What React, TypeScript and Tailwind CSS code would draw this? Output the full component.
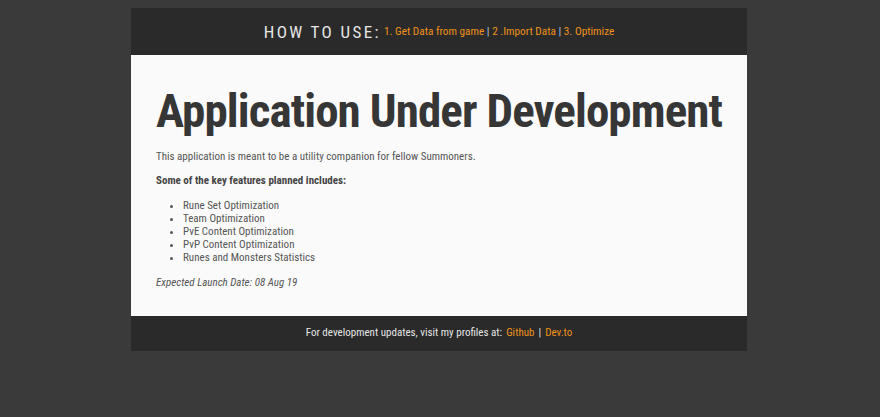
import React from "react";

const cond = { fontFamily: '"Roboto Condensed", "Liberation Sans Narrow", Roboto, sans-serif' };

export default function App() {
  return (
    <div className="min-h-[417px] w-full bg-[#3a3a3a] pt-2" style={cond}>
      <div className="w-[616px] ml-[131px]">
        <header className="flex h-[47px] items-center justify-center bg-[#2a2a2a] pt-[2px]">
          <span className="text-[17px] tracking-[2.4px] text-[#e6e6e6]">HOW TO USE:</span>
          <span className="ml-[3px] text-[11.25px] text-[#f0921a]">
            1. Get Data from game <span className="text-[#b9cce0]">|</span> 2 .Import Data{" "}
            <span className="text-[#b9cce0]">|</span> 3. Optimize
          </span>
        </header>
        <main className="bg-[#fafafa] px-[25px] pt-[28px] pb-[25px] text-[#444]">
          <h1 className="whitespace-nowrap text-[47px] font-bold leading-[56px] tracking-[-0.9px] text-[#363636]">
            Application Under Development
          </h1>
          <p className="mt-[10px] text-[11px] leading-[16px] text-[#555]">
            This application is meant to be a utility companion for fellow Summoners.
          </p>
          <p className="mt-[8px] text-[11px] font-bold leading-[16px] text-[#444]">
            Some of the key features planned includes:
          </p>
          <ul className="mt-[10px] list-disc pl-[27px] text-[11px] leading-[13px] text-[#555]">
            <li>Rune Set Optimization</li>
            <li>Team Optimization</li>
            <li>PvE Content Optimization</li>
            <li>PvP Content Optimization</li>
            <li>Runes and Monsters Statistics</li>
          </ul>
          <p className="mt-[11px] text-[11px] italic leading-[16px] text-[#555]">Expected Launch Date: 08 Aug 19</p>
        </main>
        <footer className="flex h-[35px] items-center justify-center bg-[#2a2a2a] text-[11px] text-[#e6e6e6]">
          <span>For development updates, visit my profiles at:</span>
          <span className="ml-[4px] text-[#f0921a]">Github</span>
          <span className="mx-[4px]">|</span>
          <span className="text-[#f0921a]">Dev.to</span>
        </footer>
      </div>
    </div>
  );
}
